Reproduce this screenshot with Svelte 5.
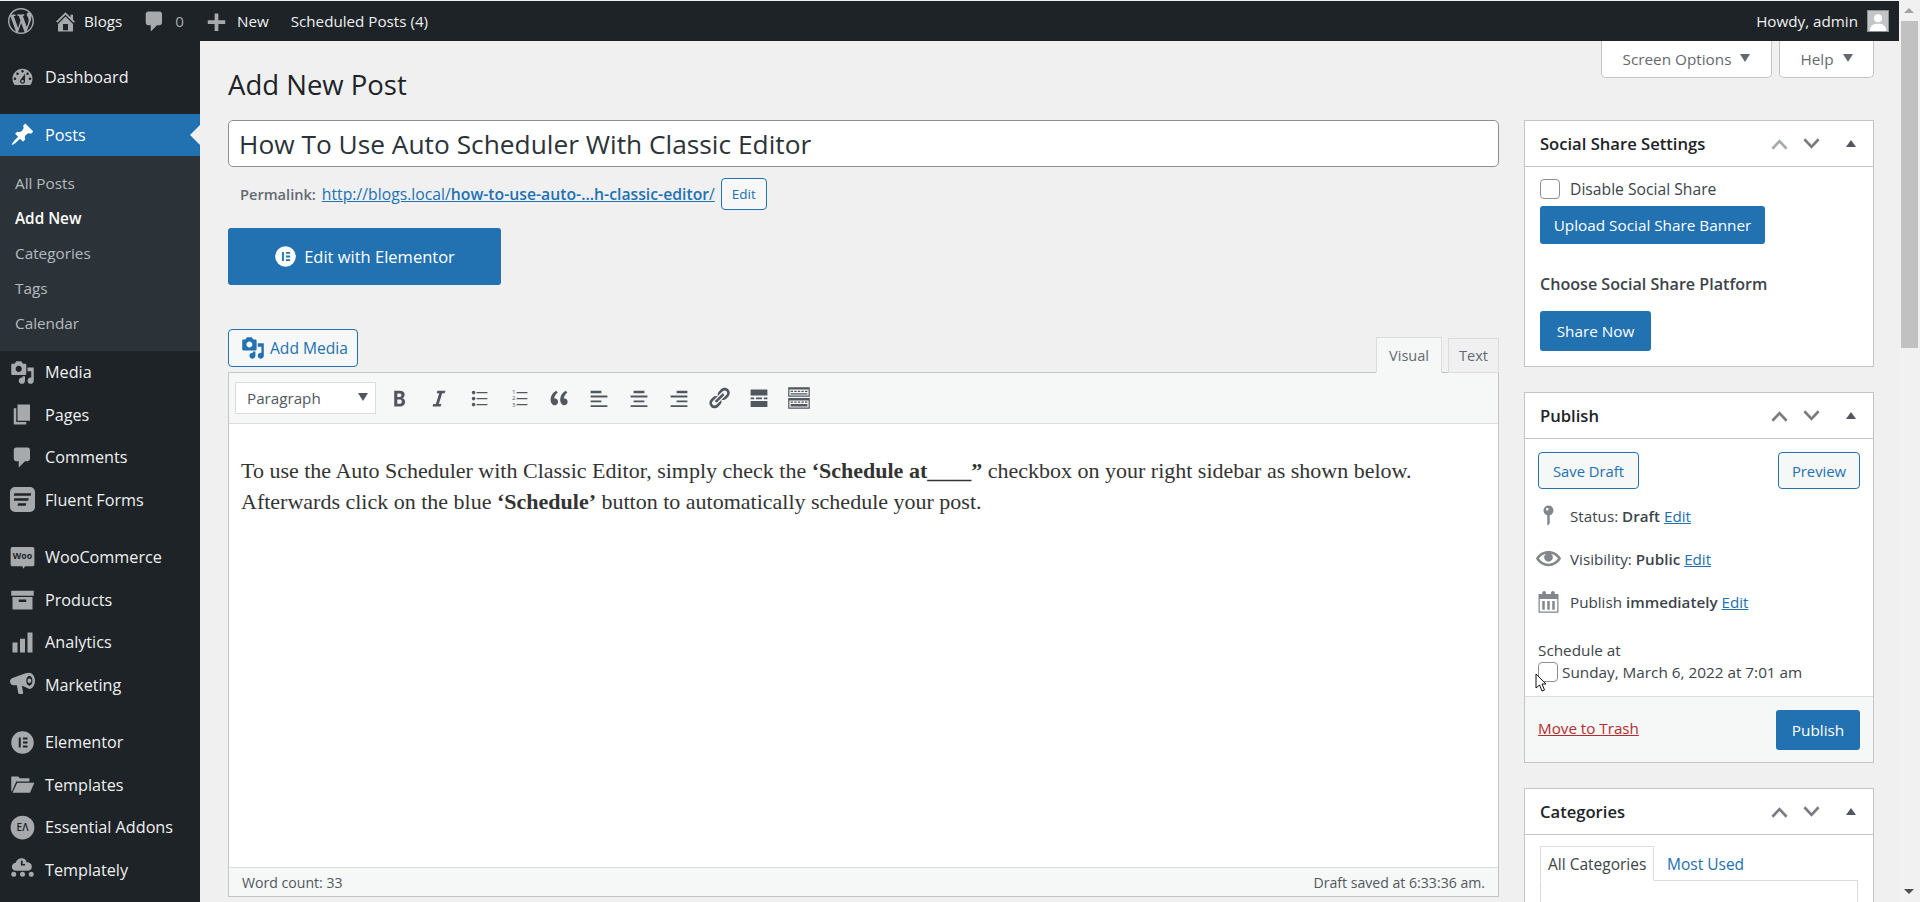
<script>
  const paths = {
    wp: 'M20 10c0-5.51-4.49-10-10-10C4.48 0 0 4.49 0 10c0 5.52 4.48 10 10 10 5.51 0 10-4.48 10-10zM7.78 15.37L4.37 6.22c.55-.02 1.17-.08 1.17-.08.5-.06.44-1.13-.06-1.11 0 0-1.45.11-2.37.11-.18 0-.37 0-.58-.01C4.12 2.69 6.87 1.11 10 1.11c2.33 0 4.45.87 6.05 2.34-.68-.11-1.65.39-1.65 1.58 0 .74.45 1.36.9 2.1.35.61.55 1.36.55 2.46 0 1.49-1.4 5-1.4 5l-3.03-8.37c.54-.02.82-.17.82-.17.5-.05.44-1.25-.06-1.22 0 0-1.44.12-2.38.12-.87 0-2.33-.12-2.33-.12-.5-.03-.56 1.2-.06 1.22l.92.08 1.26 3.41zM17.41 10c.24-.64.74-1.87.43-4.25.7 1.29 1.05 2.71 1.05 4.25 0 3.29-1.73 6.24-4.4 7.78.97-2.59 1.94-5.2 2.92-7.78zM6.1 18.09C3.12 16.65 1.11 13.53 1.11 10c0-1.3.23-2.48.72-3.59C3.25 10.3 4.67 14.2 6.1 18.09zm4.03-6.63l2.58 6.98c-.86.29-1.76.45-2.71.45-.79 0-1.57-.11-2.29-.33.81-2.38 1.62-4.74 2.42-7.1z',
    home: 'M16 8.5l1.53 1.53-1.06 1.06L10 4.62l-6.47 6.47-1.06-1.06L10 2.5l4 4v-2h2v4zm-6-2.46l6 5.99V18H4v-5.97zM12 17v-5H8v5h4z',
    comment: 'M5 2h9c1.1 0 2 .9 2 2v7c0 1.1-.9 2-2 2h-2l-5 5v-5H5c-1.1 0-2-.9-2-2V4c0-1.1.9-2 2-2z',
    plus: 'M17 9v3h-5.5v5.5h-3V12H3V9h5.5V3.5h3V9H17z',
    dashboard: 'M3.76 16h12.48c1.1-1.37 1.76-3.11 1.76-5 0-4.42-3.58-8-8-8s-8 3.58-8 8c0 1.89.66 3.63 1.76 5zM10 4c.55 0 1 .45 1 1s-.45 1-1 1-1-.45-1-1 .45-1 1-1zM6 6c.55 0 1 .45 1 1s-.45 1-1 1-1-.45-1-1 .45-1 1-1zm8 0c.55 0 1 .45 1 1s-.45 1-1 1-1-.45-1-1 .45-1 1-1zm-5.37 5.55L12 7v6c0 1.1-.9 2-2 2s-2-.9-2-2c0-.57.24-1.08.63-1.45zM4 10c.55 0 1 .45 1 1s-.45 1-1 1-1-.45-1-1 .45-1 1-1zm12 0c.55 0 1 .45 1 1s-.45 1-1 1-1-.45-1-1 .45-1 1-1zm-5 3c0-.55-.45-1-1-1s-1 .45-1 1 .45 1 1 1 1-.45 1-1z',
    pin: 'M10.44 3.02l1.82-1.82 6.36 6.35-1.83 1.82c-1.05-.68-2.48-.57-3.41.36l-.75.75c-.92.93-1.04 2.35-.35 3.41l-1.83 1.82-2.41-2.41-2.8 2.79c-.42.42-3.38 2.71-3.8 2.29s1.86-3.39 2.28-3.81l2.79-2.79L4.1 9.36l1.83-1.82c1.05.69 2.48.57 3.4-.36l.75-.75c.93-.92 1.05-2.35.36-3.41z',
    media: 'M13 11V4c0-.55-.45-1-1-1h-1.67L9 1H5L3.67 3H2c-.55 0-1 .45-1 1v7c0 .55.45 1 1 1h10c.55 0 1-.45 1-1zM7 4.5c1.38 0 2.5 1.12 2.5 2.5S8.38 9.5 7 9.5 4.5 8.38 4.5 7 5.62 4.5 7 4.5zM14 6h5v10.5c0 1.38-1.12 2.5-2.5 2.5S14 17.88 14 16.5s1.12-2.5 2.5-2.5c.17 0 .34.02.5.05V9h-3V6zm-4 8.05V13h2v3.5c0 1.38-1.12 2.5-2.5 2.5S7 17.88 7 16.5 8.12 14 9.5 14c.17 0 .34.02.5.05z',
    pages: 'M6 15V2h10v13H6zm-1 1h8v2H3V5h2v11z',
    fluent: 'M4 0h12a4 4 0 0 1 4 4v12a4 4 0 0 1-4 4H4a4 4 0 0 1-4-4V4a4 4 0 0 1 4-4zM3.5 5l-.5 2h13.5l.5-2zM3.5 9l-.5 2h11.5l.5-2zM6.5 13l-.5 2h6.5l.5-2z',
    products: 'M1 3h18v4H1zM2 8h16v10H2zM7 10v2h6v-2z',
    analytics: 'M18 18V2h-4v16h4zm-6 0V7H8v11h4zm-6 0v-8H2v8h4z',
    marketing: 'M15.5.5c2.5 0 4.5 3 4.5 6.5s-2 6.5-4.5 6.5c-.8 0-3-1.5-6-2.5l1 5.5c.1.6-.3 1-.8 1H7.5c-.5 0-.8-.3-.9-.8L5.5 10.5H3C1.3 10.5 0 9.2 0 7.5 0 6 1 5 2.5 4.5l10-3.5c1-.3 2-.5 3-.5zM15.5 3c-1.3 0-2.5 1.8-2.5 4s1.2 4 2.5 4 2.5-1.8 2.5-4-1.2-4-2.5-4zM15.5 5.2c1 0 1.5.8 1.5 1.8s-.5 1.8-1.5 1.8-1.5-.8-1.5-1.8.5-1.8 1.5-1.8z',
    elementor: 'M10 1a9 9 0 1 0 0 18 9 9 0 0 0 0-18zM7 6h1.6v8H7zM10.4 6H14v1.6h-3.6zM10.4 9.2H14v1.6h-3.6zM10.4 12.4H14V14h-3.6z',
    folder: 'M1 3.5h5.5L8 5h7.5v2.5H5L1.5 15.5 1 15zM5.8 8.5H19.5L16 16.5H2z',
    circle: 'M10 .5a9.5 9.5 0 1 0 0 19 9.5 9.5 0 0 0 0-19z',
    templately: 'M9.5 1c2 0 3.5 1.3 3.8 3.2 2.2-.2 4.2 1.3 4.2 3.5 0 2-1.6 3.3-3.5 3.3H5c-2 0-3.5-1.3-3.5-3.2 0-1.8 1.4-3.1 3.2-3.2C5 2.6 7 1 9.5 1zM8.7 3v3.8H12V5.5H10.1V3zM1 13.8a2 2 0 1 0 4 0 2 2 0 0 0-4 0zM8 13.8a2 2 0 1 0 4 0 2 2 0 0 0-4 0zM15 13.8a2 2 0 1 0 4 0 2 2 0 0 0-4 0z',
    bold: 'M6 4v13h4.54c1.37 0 2.46-.33 3.26-1 .8-.66 1.2-1.58 1.2-2.77 0-.84-.17-1.51-.51-2.01s-.9-.85-1.67-1.03v-.09c.57-.1 1.02-.4 1.36-.9s.51-1.13.51-1.91c0-1.14-.39-1.98-1.17-2.5C12.75 4.26 11.5 4 9.78 4H6zm2.57 5.15V6.26h1.36c.73 0 1.27.11 1.61.32.34.22.51.58.51 1.07 0 .54-.16.92-.47 1.15s-.82.35-1.51.35h-1.5zm0 2.19h1.6c1.44 0 2.16.53 2.16 1.61 0 .6-.17 1.05-.51 1.34s-.86.43-1.57.43H8.57v-3.38z',
    italic: 'M14.78 6h-2.13l-2.8 9h2.12l-.62 2H4.6l.62-2h2.14l2.8-9H8.03l.62-2h6.75z',
    ul: 'M5.5 7C4.67 7 4 6.33 4 5.5 4 4.68 4.67 4 5.5 4 6.32 4 7 4.68 7 5.5 7 6.33 6.32 7 5.5 7zM8 5h9v1H8V5zm-2.5 7c-.83 0-1.5-.67-1.5-1.5C4 9.68 4.67 9 5.5 9c.82 0 1.5.68 1.5 1.5 0 .83-.68 1.5-1.5 1.5zM8 10h9v1H8v-1zm-2.5 7c-.83 0-1.5-.67-1.5-1.5 0-.82.67-1.5 1.5-1.5.82 0 1.5.68 1.5 1.5 0 .83-.68 1.5-1.5 1.5zM8 15h9v1H8v-1z',
    ol: 'M8 5h9v1H8zM8 10h9v1H8zM8 15h9v1H8z',
    quote: 'M9 5.5L7.6 4C5 5.6 3 8 3 11.2 3 13.8 4.4 16 6.4 16c1.6 0 2.8-1.2 2.8-2.9 0-1.5-1-2.7-2.5-2.7-.3 0-.5 0-.7.1.2-1.8 1.3-3.7 3-5zM17 5.5L15.6 4C13 5.6 11 8 11 11.2c0 2.6 1.4 4.8 3.4 4.8 1.6 0 2.8-1.2 2.8-2.9 0-1.5-1-2.7-2.5-2.7-.3 0-.5 0-.7.1.2-1.8 1.3-3.7 3-5z',
    alignleft: 'M3 4h9v2H3zM3 8h14v1.6H3zM3 12h9v1.6H3zM3 16h14v1.6H3z',
    aligncenter: 'M5.5 4h9v2h-9zM3 8h14v1.6H3zM5.5 12h9v1.6h-9zM3 16h14v1.6H3z',
    alignright: 'M8 4h9v2H8zM3 8h14v1.6H3zM8 12h9v1.6H8zM3 16h14v1.6H3z',
    link: 'M17.74 2.76c1.68 1.69 1.68 4.41 0 6.1l-1.53 1.52c-1.12 1.12-2.7 1.47-4.14 1.09l2.62-2.61.76-.77.76-.76c.84-.84.84-2.2 0-3.04-.84-.85-2.2-.85-3.04 0l-.77.76-3.38 3.38c-.37-1.44-.02-3 1.1-4.14l1.52-1.53c1.69-1.68 4.42-1.68 6.1 0zM8.59 13.43l5.34-5.34c.42-.42.42-1.1 0-1.52-.44-.43-1.13-.39-1.53 0l-5.33 5.34c-.42.42-.42 1.1 0 1.52.44.43 1.13.39 1.52 0zm-.76 2.29l4.14-4.15c.38 1.44.03 3.02-1.09 4.14l-1.52 1.53c-1.69 1.68-4.41 1.68-6.1 0-1.68-1.68-1.68-4.42 0-6.1l1.53-1.52c1.12-1.12 2.7-1.47 4.14-1.1l-4.14 4.15c-.85.84-.85 2.2 0 3.05.84.84 2.2.84 3.04 0z',
    more: 'M3 3h14v5H3zM3 9.5h3V11H3zM7.5 9.5h5V11h-5zM14 9.5h3V11h-3zM3 12.5h14v5H3z',
    kitchen: 'M1 1h18v8H1zM2 3v5h16V3zM3 4h2v1H3zM6 4h2v1H6zM9 4h2v1H9zM12 4h2v1h-2zM15 4h2v1h-2zM3 6h14v1H3zM1 10h18v9H1zM2 12v6h16v-6zM3 13h2v1H3zM6 13h2v1H6zM9 13h2v1H9zM12 13h2v1h-2zM15 13h2v1h-2zM3 15h14v2H3z',
    status: 'M14 6c0 1.86-1.28 3.41-3 3.86V16c0 1-2 2-2 2V9.86c-1.72-.45-3-2-3-3.86 0-2.21 1.79-4 4-4s4 1.79 4 4zM8 5c0 .55.45 1 1 1s1-.45 1-1-.45-1-1-1-1 .45-1 1z',
    eye: 'M19.7 9.4C17.7 6 14 3.9 10 3.9S2.3 6 .3 9.4L0 10l.3.6c2 3.4 5.7 5.5 9.7 5.5s7.7-2.1 9.7-5.5l.3-.6-.3-.6zM10 14.1c-3.1 0-6-1.6-7.7-4.1C3.6 8 5.7 6.6 8 6.1c-.9.6-1.5 1.7-1.5 2.9 0 1.9 1.6 3.5 3.5 3.5s3.5-1.6 3.5-3.5c0-1.2-.6-2.3-1.5-2.9 2.3.5 4.4 1.9 5.7 3.9-1.7 2.5-4.6 4.1-7.7 4.1z',
    calendar: 'M15 4h3v15H2V4h3V3c0-.41.15-.76.44-1.06.29-.29.65-.44 1.06-.44s.77.15 1.06.44c.29.3.44.65.44 1.06v1h4V3c0-.41.15-.76.44-1.06.29-.29.65-.44 1.06-.44s.77.15 1.06.44c.29.3.44.65.44 1.06v1zM17 18V8H3v10h14zM5 9.5h2v7H5zM9 9.5h2v7H9zM13 9.5h2v7h-2z'
  };

  const groups = [
    [{ label: 'Dashboard', icon: 'dashboard' }],
    [
      { label: 'Posts', icon: 'pin', active: true },
      { label: 'Media', icon: 'media' },
      { label: 'Pages', icon: 'pages' },
      { label: 'Comments', icon: 'comment' },
      { label: 'Fluent Forms', icon: 'fluent' }
    ],
    [
      { label: 'WooCommerce', icon: 'woo' },
      { label: 'Products', icon: 'products' },
      { label: 'Analytics', icon: 'analytics' },
      { label: 'Marketing', icon: 'marketing' }
    ],
    [
      { label: 'Elementor', icon: 'elementor' },
      { label: 'Templates', icon: 'folder' },
      { label: 'Essential Addons', icon: 'ea' },
      { label: 'Templately', icon: 'templately' }
    ]
  ];
  const submenu = ['All Posts', 'Add New', 'Categories', 'Tags', 'Calendar'];
  const tools = ['bold', 'italic', 'ul', 'ol', 'quote', 'alignleft', 'aligncenter', 'alignright', 'link', 'more', 'kitchen'];
</script>

{#snippet icon(name, cls = '')}
  <svg class="ic {cls}" viewBox="0 0 20 20" aria-hidden="true">
    {#if name === 'woo'}
      <path d="M2 1.5h16c.8 0 1.5.7 1.5 1.5v12.5c0 .8-.7 1.5-1.5 1.5h-6l-1.2 2-1-2H2c-.8 0-1.5-.7-1.5-1.5V3c0-.8.7-1.5 1.5-1.5z" />
      <text x="10" y="11.5" class="woo-t">Woo</text>
    {:else if name === 'ea'}
      <path d={paths.circle} />
      <text x="10" y="13" class="ea-t">EΛ</text>
    {:else}
      <path d={paths[name]} fill-rule="evenodd" />
      {#if name === 'ol'}
        <text x="5.5" y="6.5" class="ol-t">1</text>
        <text x="5.5" y="12" class="ol-t">2</text>
        <text x="5.5" y="17.5" class="ol-t">3</text>
      {/if}
    {/if}
  </svg>
{/snippet}

{#snippet handles(dim = false)}
  <div class="handles">
    <svg class="chev" class:dim viewBox="0 0 18 12"><path d="M1.5 11L9 3 16.5 11" /></svg>
    <svg class="chev" viewBox="0 0 18 12"><path d="M1.5 1L9 9 16.5 1" /></svg>
    <span class="tri-up"></span>
  </div>
{/snippet}

<div class="page">
  <header class="adminbar">
    <div class="bar-left">
      {@render icon('wp', 'bar-wp')}
      <span class="bar-item home">{@render icon('home', 'bar-ic')}<span>Blogs</span></span>
      <span class="bar-item">{@render icon('comment', 'bar-ic')}<span class="muted">0</span></span>
      <span class="bar-item">{@render icon('plus', 'bar-ic')}<span>New</span></span>
      <span class="bar-item last">Scheduled Posts (4)</span>
    </div>
    <div class="howdy">
      <span>Howdy, admin</span>
      <span class="avatar">
        <svg viewBox="0 0 22 22"><circle cx="11" cy="8" r="4.5" /><path d="M2 22c0-6 4-8 9-8s9 2 9 8z" /></svg>
      </span>
    </div>
  </header>

  <div class="body">
    <nav class="sidebar">
      {#each groups as group}
        <div class="group">
          {#each group as item}
            <div class="menu-item" class:active={item.active}>
              <span class="menu-ic">{@render icon(item.icon)}</span>
              <span>{item.label}</span>
            </div>
            {#if item.active}
              <div class="submenu">
                {#each submenu as sub}
                  <div class="sub" class:current={sub === 'Add New'}>{sub}</div>
                {/each}
              </div>
            {/if}
          {/each}
        </div>
      {/each}
    </nav>

    <main class="content">
      <div class="head">
        <h1>Add New Post</h1>
        <div class="meta-links">
          <span class="meta-tab screen">Screen Options <span class="tri-down"></span></span>
          <span class="meta-tab help">Help <span class="tri-down"></span></span>
        </div>
      </div>

      <div class="columns">
        <section class="editor-col">
          <div class="title-input">How To Use Auto Scheduler With Classic Editor</div>
          <div class="permalink">
            <b>Permalink:</b>
            <a href="#top">http://blogs.local/<b>how-to-use-auto-...h-classic-editor</b>/</a>
            <span class="btn-small">Edit</span>
          </div>
          <div class="elementor-btn">
            <svg class="el-ic" viewBox="0 0 20 20"><path d={paths.elementor} fill-rule="evenodd" /></svg>
            Edit with Elementor
          </div>

          <div class="editor-top">
            <span class="btn-outline add-media">{@render icon('media')}Add Media</span>
            <div class="tabs">
              <span class="tab on">Visual</span>
              <span class="tab">Text</span>
            </div>
          </div>

          <div class="editor">
            <div class="toolbar">
              <span class="format">Paragraph <span class="tri-down dark"></span></span>
              <div class="tools">
                {#each tools as t}
                  <span class="tool">{@render icon(t)}</span>
                {/each}
              </div>
            </div>
            <div class="doc">
              <p>To use the Auto Scheduler with Classic Editor, simply check the <b>‘Schedule at____”</b> checkbox on your right sidebar as shown below.<br />Afterwards click on the blue <b>‘Schedule’</b> button to automatically schedule your post.</p>
            </div>
            <div class="statusbar">
              <span>Word count: 33</span>
              <span>Draft saved at 6:33:36 am.</span>
            </div>
          </div>
        </section>

        <aside class="side-col">
          <div class="box">
            <div class="box-head"><h2>Social Share Settings</h2>{@render handles(true)}</div>
            <div class="social">
              <label class="check-row"><span class="check"></span>Disable Social Share</label>
              <span class="btn-primary upload">Upload Social Share Banner</span>
              <div class="choose">Choose Social Share Platform</div>
              <span class="btn-primary share">Share Now</span>
            </div>
          </div>

          <div class="box">
            <div class="box-head"><h2>Publish</h2>{@render handles()}</div>
            <div class="publish">
              <div class="draft-row">
                <span class="btn-outline save">Save Draft</span>
                <span class="btn-outline preview">Preview</span>
              </div>
              <div class="pub-row">{@render icon('status')}<span>Status: <b>Draft</b> <a href="#top">Edit</a></span></div>
              <div class="pub-row">{@render icon('eye')}<span>Visibility: <b>Public</b> <a href="#top">Edit</a></span></div>
              <div class="pub-row">{@render icon('calendar')}<span>Publish <b>immediately</b> <a href="#top">Edit</a></span></div>
              <div class="schedule">Schedule at</div>
              <div class="schedule-row">
                <span class="check cursor-host">
                  <svg class="cursor" viewBox="0 0 12 19"><path d="M1 1v14l3.5-3 2.5 6 2.5-1-2.5-6H11z" /></svg>
                </span>
                <span>Sunday, March 6, 2022 at 7:01 am</span>
              </div>
            </div>
            <div class="pub-foot">
              <a class="trash" href="#top">Move to Trash</a>
              <span class="btn-primary publish-btn">Publish</span>
            </div>
          </div>

          <div class="box cats">
            <div class="box-head"><h2>Categories</h2>{@render handles()}</div>
            <div class="cat-body">
              <div class="cat-tabs">
                <span class="cat-tab on">All Categories</span>
                <a class="cat-tab" href="#top">Most Used</a>
              </div>
              <div class="cat-panel"></div>
            </div>
          </div>
        </aside>
      </div>
    </main>

    <div class="scrollbar">
      <span class="arrow up"></span>
      <span class="thumb"></span>
      <span class="arrow down"></span>
    </div>
  </div>
</div>

<style>
  :global(body) { margin: 0; background: #f0f0f1; }
  a { color: #2271b1; }
  b { font-weight: 600; }

  .page {
    height: 902px;
    overflow: hidden;
    padding-top: 1px;
    box-sizing: border-box;
    display: flex;
    flex-direction: column;
    font-family: "Open Sans", "Noto Sans", sans-serif;
    font-size: 15px;
    color: #3c434a;
  }
  .ic { width: 20px; height: 20px; fill: currentColor; display: block; flex: none; }
  .ic text { font-family: "Open Sans", sans-serif; text-anchor: middle; }
  .woo-t { font-size: 7px; font-weight: 700; fill: #1d2327; }
  .ea-t { font-size: 8px; font-weight: 600; fill: #1d2327; }
  .ol-t { font-size: 5px; }

  .adminbar {
    height: 40px;
    flex: none;
    background: #1d2327;
    color: #f0f0f1;
    display: flex;
    justify-content: space-between;
    align-items: center;
    font-size: 15.2px;
    margin-right: 21px;
    padding: 0 10px 0 8px;
  }
  .bar-left, .bar-item, .howdy { display: flex; align-items: center; }
  .bar-wp { width: 26px; height: 26px; color: #a7aaad; }
  .bar-ic { width: 25px; height: 25px; color: #a7aaad; margin-right: 8px; }
  .bar-item { margin-left: 20px; }
  .bar-item.home { margin-left: 19px; }
  .bar-item.home .bar-ic { margin-right: 6px; }
  .bar-item.last { margin-left: 22px; }
  .muted { color: #a7aaad; }
  .howdy { gap: 9px; }
  .avatar {
    width: 20px;
    height: 20px;
    background: #c3c4c7;
    border: 1px solid #8c8f94;
    overflow: hidden;
    display: block;
  }
  .avatar svg { width: 20px; height: 20px; fill: #fff; display: block; }

  .body { flex: 1; display: flex; min-height: 0; }

  .sidebar {
    width: 200px;
    flex: none;
    background: #1d2327;
    color: #f0f0f1;
    font-size: 16.2px;
    padding-top: 15px;
    display: flex;
    flex-direction: column;
    gap: 15px;
  }
  .menu-item {
    height: 42.5px;
    display: flex;
    align-items: center;
    position: relative;
  }
  .menu-ic {
    width: 45px;
    flex: none;
    display: flex;
    justify-content: center;
    color: #a7aaad;
  }
  .menu-ic .ic { width: 25px; height: 25px; }
  .menu-item.active { background: #2271b1; color: #fff; }
  .menu-item.active .menu-ic { color: #fff; }
  .menu-item.active::after {
    content: '';
    position: absolute;
    right: 0;
    top: 50%;
    margin-top: -10px;
    border: 10px solid transparent;
    border-right-color: #f0f0f1;
    border-left-width: 0;
  }
  .submenu { background: #2c3338; padding: 10px 0; }
  .sub {
    height: 35px;
    line-height: 34px;
    padding-left: 15px;
    font-size: 15.3px;
    color: rgba(240, 246, 252, 0.7);
  }
  .sub.current { color: #fff; font-weight: 600; }

  .content { flex: 1; padding-left: 28px; padding-right: 25px; min-width: 0; }
  .head { height: 79px; display: flex; justify-content: space-between; align-items: flex-start; }
  h1 {
    margin: 26px 0 0;
    font-size: 27.5px;
    line-height: 36px;
    font-weight: 400;
    color: #1d2327;
  }
  .meta-links { display: flex; gap: 7px; }
  .meta-tab {
    height: 37px;
    box-sizing: border-box;
    background: #fff;
    border: 1px solid #c3c4c7;
    border-top: 0;
    border-radius: 0 0 5px 5px;
    color: #646970;
    font-size: 15.3px;
    display: flex;
    align-items: center;
    justify-content: center;
    gap: 9px;
  }
  .meta-tab.screen { width: 171px; }
  .meta-tab.help { width: 95px; }
  .tri-down {
    display: inline-block;
    border-style: solid;
    border-width: 8px 5px 0;
    border-color: #646970 transparent transparent;
    margin-top: -2px;
  }
  .tri-down.dark { border-color: #50575e transparent transparent; }

  .columns { display: flex; gap: 25px; align-items: flex-start; }
  .editor-col { flex: 1; min-width: 0; }
  .side-col { width: 350px; flex: none; display: flex; flex-direction: column; gap: 25px; }

  .title-input {
    height: 47px;
    box-sizing: border-box;
    background: #fff;
    border: 1px solid #8c8f94;
    border-radius: 5px;
    font-size: 26.3px;
    line-height: 47px;
    padding-left: 10px;
    color: #2c3338;
  }
  .permalink {
    margin-top: 11px;
    height: 32px;
    padding-left: 12px;
    display: flex;
    align-items: center;
    gap: 6px;
    color: #646970;
    font-size: 14.6px;
  }
  .permalink a { font-size: 15.75px; }
  .btn-small {
    width: 46px;
    height: 32px;
    box-sizing: border-box;
    border: 1px solid #2271b1;
    border-radius: 4px;
    background: #f6f7f7;
    color: #2271b1;
    font-size: 13.5px;
    display: flex;
    align-items: center;
    justify-content: center;
  }
  .elementor-btn {
    margin-top: 18px;
    width: 273px;
    height: 57px;
    border-radius: 3px;
    background: #2271b1;
    color: #fff;
    font-size: 16.5px;
    display: flex;
    align-items: center;
    justify-content: center;
    gap: 7px;
  }
  .el-ic { width: 23px; height: 23px; fill: #fff; }

  .editor-top {
    margin-top: 44px;
    height: 43px;
    display: flex;
    justify-content: space-between;
    align-items: flex-start;
  }
  .btn-outline {
    height: 38px;
    box-sizing: border-box;
    border: 1px solid #2271b1;
    border-radius: 4px;
    background: #f6f7f7;
    color: #2271b1;
    font-size: 15px;
    display: inline-flex;
    align-items: center;
  }
  .add-media { padding: 0 0 0 12px; gap: 5px; width: 130px; font-size: 15.6px; white-space: nowrap; }
  .add-media .ic { width: 24px; height: 24px; }
  .tabs { display: flex; gap: 6px; align-items: flex-end; margin-top: 8px; height: 36px; position: relative; z-index: 1; }
  .tab {
    height: 35px;
    width: 51px;
    box-sizing: border-box;
    border: 1px solid #dcdcde;
    background: #f0f0f1;
    color: #646970;
    font-size: 14.5px;
    display: flex;
    align-items: center;
    justify-content: center;
  }
  .tab.on { background: #f6f7f7; height: 36px; border-bottom-color: #f6f7f7; width: 66px; }

  .editor { height: 525px; box-sizing: border-box; border: 1px solid #c3c4c7; background: #fff; display: flex; flex-direction: column; }
  .toolbar {
    height: 51px;
    flex: none;
    background: #f6f7f7;
    border-bottom: 1px solid #dcdcde;
    display: flex;
    align-items: center;
    padding-left: 6px;
    box-sizing: border-box;
  }
  .format {
    width: 141px;
    height: 32px;
    box-sizing: border-box;
    background: #fff;
    border: 1px solid #dcdcde;
    color: #50575e;
    font-size: 15.2px;
    padding: 0 7px 0 11px;
    display: flex;
    align-items: center;
    justify-content: space-between;
  }
  .tools { display: flex; margin-left: 3px; color: #50575e; }
  .tool { width: 40px; display: flex; justify-content: center; }
  .tool .ic { width: 24px; height: 24px; }
  .doc { flex: 1; padding: 0 12px; }
  .doc p {
    margin: 32px 0 0;
    font-family: "Liberation Serif", serif;
    font-size: 22px;
    line-height: 30.5px;
    color: #333;
  }
  .doc b { font-weight: 700; }
  .statusbar {
    height: 29px;
    flex: none;
    box-sizing: border-box;
    border-top: 1px solid #dcdcde;
    background: #f6f7f7;
    color: #50575e;
    font-size: 14.1px;
    display: flex;
    align-items: center;
    justify-content: space-between;
    padding: 1px 13px 0;
  }

  .box { background: #fff; border: 1px solid #c3c4c7; }
  .box-head {
    height: 46px;
    box-sizing: border-box;
    border-bottom: 1px solid #c3c4c7;
    display: flex;
    align-items: center;
    justify-content: space-between;
    padding: 0 17px 0 15px;
  }
  h2 { margin: 0; font-size: 16.6px; font-weight: 600; color: #1d2327; }
  .handles { display: flex; align-items: center; gap: 15px; }
  .chev { width: 17px; height: 12px; fill: none; stroke: #787c82; stroke-width: 2.8; }
  .chev.dim { stroke: #a7aaad; }
  .tri-up {
    margin-left: 11px;
    border-style: solid;
    border-width: 0 5px 7px;
    border-color: transparent transparent #50575e;
  }

  .social { height: 199px; padding: 12px 15px 0; box-sizing: border-box; }
  .check-row { display: flex; align-items: center; gap: 10px; height: 20px; font-size: 15.7px; }
  .check {
    width: 20px;
    height: 20px;
    box-sizing: border-box;
    flex: none;
    background: #fff;
    border: 1px solid #8c8f94;
    border-radius: 4px;
    display: block;
  }
  .btn-primary {
    background: #2271b1;
    color: #fff;
    border-radius: 3px;
    font-size: 15.3px;
    display: flex;
    align-items: center;
    justify-content: center;
  }
  .upload { width: 225px; height: 38px; margin-top: 7px; }
  .choose { margin-top: 28px; height: 24px; line-height: 24px; font-size: 16.1px; font-weight: 600; }
  .share { width: 111px; height: 40px; margin-top: 15px; }

  .publish { padding: 13px 13px 0; height: 257px; box-sizing: border-box; }
  .draft-row { display: flex; justify-content: space-between; }
  .draft-row .btn-outline { height: 37px; justify-content: center; font-size: 14.8px; }
  .draft-row .save { width: 101px; }
  .draft-row .preview { width: 82px; }
  .pub-row {
    height: 43px;
    display: flex;
    align-items: center;
    gap: 9px;
    font-size: 15.2px;
  }
  .draft-row + .pub-row { margin-top: 5px; }
  .pub-row .ic { width: 25px; height: 25px; color: #82878c; margin-left: -2px; }
  .pub-row a { text-decoration: underline; }
  .schedule { margin-top: 16px; font-size: 15.3px; height: 22px; line-height: 22px; }
  .schedule-row { display: flex; align-items: center; gap: 4px; height: 22px; font-size: 15.3px; }
  .cursor-host { position: relative; }
  .cursor {
    position: absolute;
    left: -4px;
    top: 10px;
    width: 12px;
    height: 19px;
    fill: #fff;
    stroke: #111;
    stroke-width: 1;
  }
  .pub-foot {
    height: 66px;
    box-sizing: border-box;
    background: #f6f7f7;
    border-top: 1px solid #dcdcde;
    display: flex;
    justify-content: space-between;
    align-items: center;
    padding: 0 13px;
  }
  .trash { color: #b32d2e; font-size: 15.2px; text-decoration: underline; margin-top: -3px; }
  .publish-btn { width: 84px; height: 40px; }

  .cats { min-height: 300px; }
  .cat-body { padding: 11px 15px 0; }
  .cat-tabs { display: flex; height: 35px; align-items: center; margin-bottom: -1px; position: relative; }
  .cat-tab { font-size: 15.5px; text-decoration: none; padding: 0 13px; }
  .cat-tab.on {
    height: 35px;
    box-sizing: border-box;
    display: flex;
    align-items: center;
    border: 1px solid #dcdcde;
    border-bottom-color: #fff;
    padding: 0 7px;
    width: 114px;
    white-space: nowrap;
  }
  .cat-panel { height: 200px; border: 1px solid #dcdcde; }

  .scrollbar {
    width: 21px;
    flex: none;
    margin-top: -41px;
    background: #f1f1f1;
    position: relative;
    z-index: 2;
  }
  .thumb { position: absolute; left: 2px; top: 21px; width: 17px; height: 327px; background: #c1c1c1; }
  .arrow { position: absolute; left: 5px; border-style: solid; border-color: transparent; }
  .arrow.up { top: 8px; border-width: 0 5px 5px; border-bottom-color: #a3a3a3; }
  .arrow.down { bottom: 8px; border-width: 5px 5px 0; border-top-color: #505050; }
</style>
